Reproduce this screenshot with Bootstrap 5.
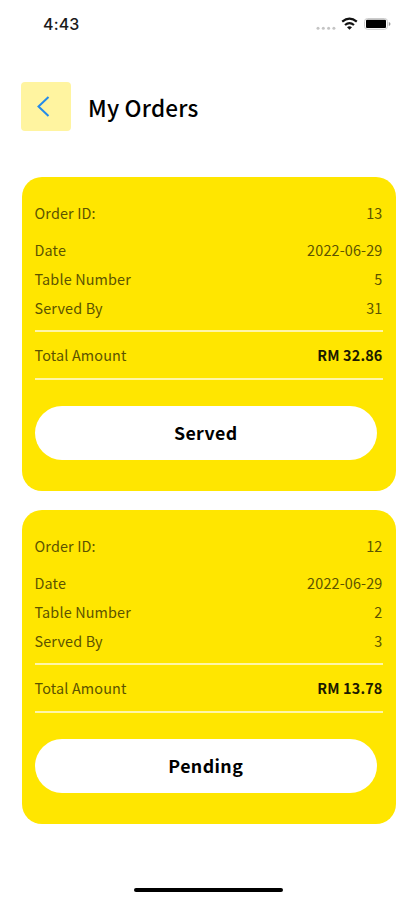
<!DOCTYPE html>
<html lang="en">
<head>
<meta charset="utf-8">
<meta name="viewport" content="width=device-width, initial-scale=1">
<title>My Orders</title>
<link href="https://cdn.jsdelivr.net/npm/bootstrap@5.3.0/dist/css/bootstrap.min.css" rel="stylesheet">
<style>
body{font-family:"Noto Sans CJK SC","Noto Sans",sans-serif;background:#fff;color:#000}
.screen{height:900px;overflow:hidden}
.status-bar{height:82px;padding:14px 26px 0 43px}
.clock{font:500 16px/20px Inter,sans-serif;letter-spacing:.15px;color:#1a1a1a}
.page-head{height:49px;margin:0 21px;gap:17px}
.back-btn{width:50px;height:49px;border-radius:4px;background:#fff4a0}
.page-title{font-size:22.5px;line-height:32px;font-weight:500;letter-spacing:.2px}
.orders{margin:46px 21px 0 21.5px;gap:19px}
.order-card{height:314px;border:0;border-radius:20px;background:#ffe600;padding:21px 13px 0}
.order-row{height:29px;font-size:14.4px;line-height:29px;color:#5c5300;letter-spacing:.15px}
.order-row span:last-child{margin-right:.5px}
.order-id{margin-bottom:8px}
.total-row{height:50px;margin-top:8px;padding-bottom:2px;border-top:2px solid #fff6a8;border-bottom:2px solid #fff6a8}
.total-price{font-weight:700;color:#1c1a00}
.state-btn{height:54px;margin:26px 6px 0 0;padding:0 0 1px;background:#fff;color:#000;font-size:17.8px;font-weight:700;letter-spacing:.4px}
.home-bar{width:149px;height:4px;margin-bottom:8px;background:#000}
</style>
</head>
<body>
<div class="screen d-flex flex-column">
  <header class="status-bar d-flex justify-content-between align-items-start">
    <span class="clock">4:43</span>
    <svg width="76" height="20" viewBox="315 14 76 20">
      <g fill="#c4c4c4"><circle cx="318" cy="28.3" r="1.5"/><circle cx="323.3" cy="28.3" r="1.5"/><circle cx="328.6" cy="28.3" r="1.5"/><circle cx="333.9" cy="28.3" r="1.5"/></g>
      <g fill="none" stroke="#111" stroke-width="2.2"><path d="M342.2 21.6Q349.5 15.7 356.8 21.6"/><path d="M345 25Q349.5 21.2 354 25"/></g>
      <path d="M347 27.2Q349.5 25.4 352 27.2L349.5 29.8Z" fill="#111"/>
      <rect x="364.5" y="18.5" width="23" height="10.8" rx="3" fill="#fff" stroke="#ccc"/>
      <rect x="366" y="19.8" width="20" height="8.2" rx="1" fill="#000"/>
      <path d="M388.8 22v4q1.7-.6 1.7-2t-1.7-2Z" fill="#999"/>
    </svg>
  </header>
  <div class="page-head d-flex align-items-center">
    <button type="button" class="back-btn btn p-0 border-0 d-flex align-items-center justify-content-center" aria-label="Back">
      <svg width="50" height="49" viewBox="0 0 50 49" fill="none" stroke="#258bea" stroke-width="2"><path d="M27.5 15 17.5 24.5 27.5 34"/></svg>
    </button>
    <h1 class="page-title m-0">My Orders</h1>
  </div>
  <main class="orders d-flex flex-column">
    <section class="order-card card">
      <div class="order-row order-id d-flex justify-content-between"><span>Order ID:</span><span>13</span></div>
      <div class="order-row d-flex justify-content-between"><span>Date</span><span>2022-06-29</span></div>
      <div class="order-row d-flex justify-content-between"><span>Table Number</span><span>5</span></div>
      <div class="order-row d-flex justify-content-between"><span>Served By</span><span>31</span></div>
      <div class="order-row total-row d-flex justify-content-between align-items-center"><span>Total Amount</span><span class="total-price">RM 32.86</span></div>
      <button type="button" class="state-btn btn rounded-pill border-0">Served</button>
    </section>
    <section class="order-card card">
      <div class="order-row order-id d-flex justify-content-between"><span>Order ID:</span><span>12</span></div>
      <div class="order-row d-flex justify-content-between"><span>Date</span><span>2022-06-29</span></div>
      <div class="order-row d-flex justify-content-between"><span>Table Number</span><span>2</span></div>
      <div class="order-row d-flex justify-content-between"><span>Served By</span><span>3</span></div>
      <div class="order-row total-row d-flex justify-content-between align-items-center"><span>Total Amount</span><span class="total-price">RM 13.78</span></div>
      <button type="button" class="state-btn btn rounded-pill border-0">Pending</button>
    </section>
  </main>
  <div class="home-bar rounded-pill mt-auto mx-auto"></div>
</div>
<script src="https://cdn.jsdelivr.net/npm/bootstrap@5.3.0/dist/js/bootstrap.bundle.min.js"></script>
</body>
</html>
